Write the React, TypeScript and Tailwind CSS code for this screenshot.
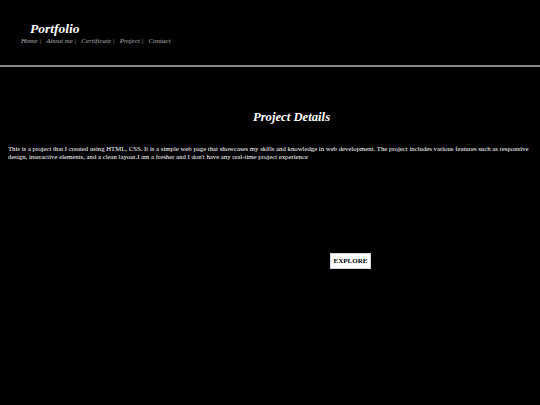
export default function App() {
  const links = ["Home", "About me", "Certificate", "Project", "Contact"]
  return (
    <div
      className="min-h-[405px] w-full bg-black text-white"
      style={{ fontFamily: '"Liberation Serif", "Times New Roman", serif' }}
    >
      {/* Header */}
      <header className="pl-[21px] pt-[20px]">
        <div className="pl-[9px] text-[13.5px] font-bold italic leading-[17px]">
          Portfolio
        </div>
        <nav className="flex text-[7px] italic leading-[9px] text-[#b0b0b0]">
          {links.map((l, i) => (
            <span key={l} className="mr-[5px]">
              {l}
              {i < links.length - 1 && <span className="ml-[1.5px]">|</span>}
            </span>
          ))}
        </nav>
      </header>
      <div className="mt-[19px] h-[2px] w-full bg-[#8a8a8a]" />

      {/* Project */}
      <section className="pt-[42px]">
        <h2 className="pl-[43px] text-center text-[12.7px] font-bold italic leading-[16px]">
          Project Details
        </h2>
        <p className="mt-[20px] pl-[8px] pr-[4px] text-[6.75px] leading-[8px] text-white">
          This is a project that I created using HTML, CSS. It is a simple web page that
          showcases my skills and knowledge in web development. The project includes various
          features such as responsive design, interactive elements, and a clean layout.I am a
          fresher and I don't have any real-time project experience
        </p>
        <div className="mt-[92px] flex pl-[330px]">
          <button className="h-[16px] w-[41px] border border-[#cfd4e0] bg-white text-[7px] font-bold text-black">
            EXPLORE
          </button>
        </div>
      </section>
    </div>
  )
}
